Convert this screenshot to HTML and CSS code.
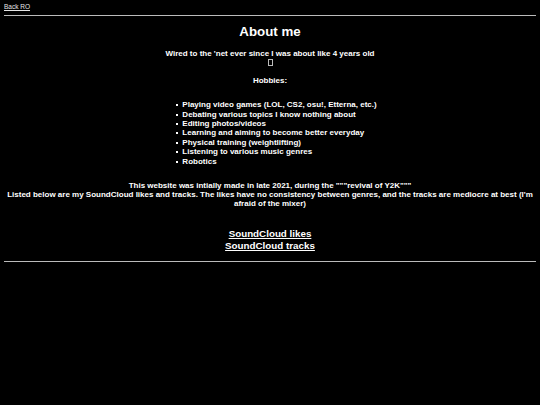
FILE: index.html
```html
<!DOCTYPE html>
<html>
<head>
<meta charset="utf-8">
<link rel="stylesheet" href="styles.css">
</head>
<body>
<div class="topbar"><a class="back" href="#">Back RO</a></div>
<hr class="rule">
<main class="content">
  <h1 class="title">About me</h1>
  <p class="intro">Wired to the 'net ever since I was about like 4 years old<br><span class="tofu"></span></p>
  <p class="hobbies-label">Hobbies:</p>
  <div class="list-wrap">
    <ul class="hobbies">
      <li>Playing video games (LOL, CS2, osu!, Etterna, etc.)</li>
      <li>Debating various topics I know nothing about</li>
      <li>Editing photos/videos</li>
      <li>Learning and aiming to become better everyday</li>
      <li>Physical training (weightlifting)</li>
      <li>Listening to various music genres</li>
      <li>Robotics</li>
    </ul>
  </div>
  <p class="about-site">This website was intially made in late 2021, during the """revival of Y2K"""<br>Listed below are my SoundCloud likes and tracks. The likes have no consistency between genres, and the tracks are mediocre at best (I'm afraid of the mixer)</p>
  <div class="links">
    <a href="#">SoundCloud likes</a><br>
    <a href="#">SoundCloud tracks</a>
  </div>
</main>
<hr class="rule bottom">
</body>
</html>
```
FILE: styles.css
```css
html, body {
  background: #000;
}
body {
  margin: 0 4px;
  color: #fff;
  font-family: "Liberation Sans", Arial, sans-serif;
}
.topbar {
  padding-top: 3px;
  font-size: 6.5px;
  line-height: 8px;
}
.back,
.back:visited {
  color: #e6e6e6;
}
.rule {
  border: 0;
  border-top: 1px solid #bbb;
  margin: 4px 0 0 0;
  height: 0;
}
.content {
  text-align: center;
  font-size: 8px;
  line-height: 9.4px;
  font-weight: bold;
  padding: 0 3px;
}
.title {
  font-size: 13.3px;
  line-height: 16px;
  margin: 8px 0 0 0;
}
.intro {
  margin: 9px 0 0 0;
}
.tofu {
  display: inline-block;
  width: 3px;
  height: 5px;
  border: 0.6px solid #bbb;
  vertical-align: -0.5px;
}
.hobbies-label {
  margin: 8px 0 0 0;
}
.list-wrap {
  margin-top: 15px;
}
.hobbies {
  display: inline-block;
  text-align: left;
  margin: 0;
  padding-left: 19px;
  list-style: none;
}
.hobbies li {
  position: relative;
}
.hobbies li::before {
  content: "";
  position: absolute;
  left: -6px;
  top: 4px;
  width: 2px;
  height: 2px;
  background: #fff;
}
.about-site {
  margin: 14.5px 0 0 0;
}
.links {
  margin-top: 19.5px;
  font-size: 9.8px;
  line-height: 12px;
}
.links a,
.links a:visited {
  color: #fff;
}
.bottom {
  margin-top: 9px;
}
```
